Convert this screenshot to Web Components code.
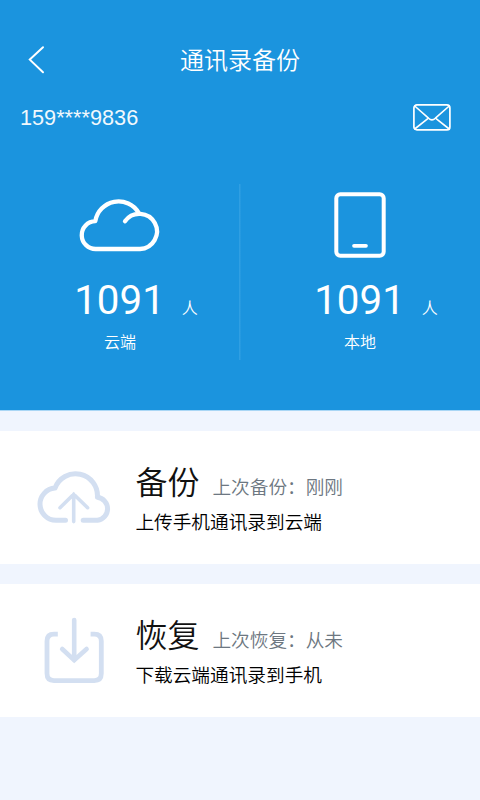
<!DOCTYPE html>
<html lang="zh-CN">
<head>
<meta charset="utf-8">
<title>通讯录备份</title>
<style>
html,body{margin:0;padding:0;background:#f0f5fe}
body{font-family:Roboto,"Noto Sans CJK SC DemiLight","Noto Sans CJK SC",sans-serif}
</style>
</head>
<body>
<contacts-page></contacts-page>
<script>
const define = (name, html) => {
  const t = document.createElement('template');
  t.innerHTML = html;
  customElements.define(name, class extends HTMLElement {
    constructor() {
      super();
      this.attachShadow({mode: 'open'}).append(t.content.cloneNode(true));
    }
  });
};

const icons = {
  back: [20, 32, '<path d="M17 3.3 3.8 15.6 17 28.2" stroke-width="2"/>'],
  mail: [40, 30, '<rect x="1.9" y="2.9" width="36" height="25" rx="3" stroke-width="1.7"/><path d="M2.7 4 16.5 16.2Q20 19.6 23.4 16.2L37.2 4M2.7 27 15.5 16.8M37.2 27 24.4 16.8" stroke-width="1.6"/>'],
  cloud: [82, 66, '<path d="M46 30.2A17.6 17.6 0 1 1 61 58H17A13.9 13.9 0 0 1 16.3 30.2A23.5 23.5 0 0 1 59.8 22" stroke-width="4.3" stroke-linejoin="round"/>'],
  tablet: [54, 68, '<rect x="3.3" y="3.3" width="47.4" height="61.4" rx="4" stroke-width="4"/><path d="M21 54.8H33" stroke-width="3.7"/>'],
  upload: [76, 54, '<path d="M29.5 49.3H20A16.12 16.12 0 0 1 19 17.1A21.9 21.9 0 0 1 61.4 26.2A11.65 11.65 0 0 1 61.5 49.3H47.2" stroke-width="5" stroke-linejoin="round"/><path d="M37.7 50.6V23.2M24 36.7 37.7 23.2 51.6 36.7" stroke-width="3.6"/>'],
  download: [64, 68, '<path d="M15.8 17.1H12Q5 17.1 5 24.1V56.6Q5 63.6 12 63.6H52.3Q59.3 63.6 59.3 56.6V24.1Q59.3 17.1 52.3 17.1H48.6" stroke-width="4.8" stroke-linecap="butt"/><path d="M32.2 3V43.2M20.2 32 32.2 43.2 44.6 32" stroke-width="4.6"/>']
};
customElements.define('line-icon', class extends HTMLElement {
  connectedCallback() {
    const [w, h, body] = icons[this.getAttribute('name')];
    this.attachShadow({mode: 'open'}).innerHTML =
      `<style>:host{display:block;flex:none}svg{display:block;overflow:visible;fill:none;stroke:currentColor;stroke-linecap:round}</style>
       <svg width="${w}" height="${h}" viewBox="0 0 ${w} ${h}">${body}</svg>`;
  }
});

define('title-bar', `<style>
:host{display:grid;grid-template-columns:46px 1fr 46px;align-items:center;height:36px}
line-icon{justify-self:end}
h1{margin:2px 0 0;font-weight:400;font-size:24px;line-height:36px;text-align:center}
</style><line-icon name="back"></line-icon><h1><slot></slot></h1>`);

define('account-row', `<style>
:host{display:flex;align-items:center;justify-content:space-between;height:30px;padding:0 28px 0 20px}
span{font:21.7px/30px "Liberation Sans",sans-serif;opacity:.94;padding-top:1px}
</style><span><slot></slot></span><line-icon name="mail"></line-icon>`);

define('count-panel', `<style>
:host{display:flex;flex-direction:column;align-items:center;width:240px;box-sizing:border-box;color:#fff}
.icon{height:76px}
.count{display:flex;align-items:baseline;align-self:stretch;justify-content:center;gap:17px;height:48px;padding-left:32px;margin-top:10px}
.number{font:40.3px/48px Roboto,sans-serif}
.unit{font-size:16px;line-height:24px}
.label{font-size:16px;line-height:24px;margin-top:5.5px}
</style><div class="icon"><slot name="icon"></slot></div>
<div class="count"><span class="number"><slot></slot></span><span class="unit">人</span></div>
<div class="label"><slot name="label"></slot></div>`);

define('summary-header', `<style>
:host{display:block;box-sizing:border-box;height:410px;padding-top:41px;background:#1b94de;color:#fff;box-shadow:0 1px #a9d6f5}
account-row{margin-top:25px}
.counts{display:flex;margin-top:52px;height:176px;background:linear-gradient(#309fe2,#309fe2) center/1.5px 100% no-repeat}
count-panel{padding-top:7px}
</style><title-bar>通讯录备份</title-bar><account-row>159****9836</account-row>
<div class="counts">
<count-panel><line-icon slot="icon" name="cloud"></line-icon>1091<span slot="label">云端</span></count-panel>
<count-panel><line-icon slot="icon" name="tablet"></line-icon>1091<span slot="label">本地</span></count-panel>
</div>`);

define('action-card', `<style>
:host{display:grid;grid-template-columns:100px 1fr;column-gap:35.4px;height:133.3px;background:#fff}
.icon{display:grid;place-items:center;color:#d3dff1;width:148px;height:134px}
.text{padding-top:28px}
.head{display:flex;align-items:baseline;gap:13px;height:48px}
h2{margin:0;font-weight:400;font-size:32px;line-height:48px;color:#111}
.state{font-size:18.67px;line-height:28px;color:#6d7781}
p{margin:2.5px 0 0;font-size:18.67px;line-height:28px;color:#000}
</style><div class="icon"><slot name="icon"></slot></div>
<div class="text"><div class="head"><h2><slot></slot></h2><span class="state"><slot name="state"></slot></span></div>
<p><slot name="detail"></slot></p></div>`);

define('contacts-page', `<style>
:host{display:block;height:800px;overflow:hidden;background:#f0f5fe}
main{display:grid;gap:20px;padding-top:20.5px}
</style><summary-header></summary-header><main>
<action-card><line-icon slot="icon" name="upload"></line-icon>备份<span slot="state">上次备份：刚刚</span><span slot="detail">上传手机通讯录到云端</span></action-card>
<action-card><line-icon slot="icon" name="download"></line-icon>恢复<span slot="state">上次恢复：从未</span><span slot="detail">下载云端通讯录到手机</span></action-card>
</main>`);
</script>
</body>
</html>
